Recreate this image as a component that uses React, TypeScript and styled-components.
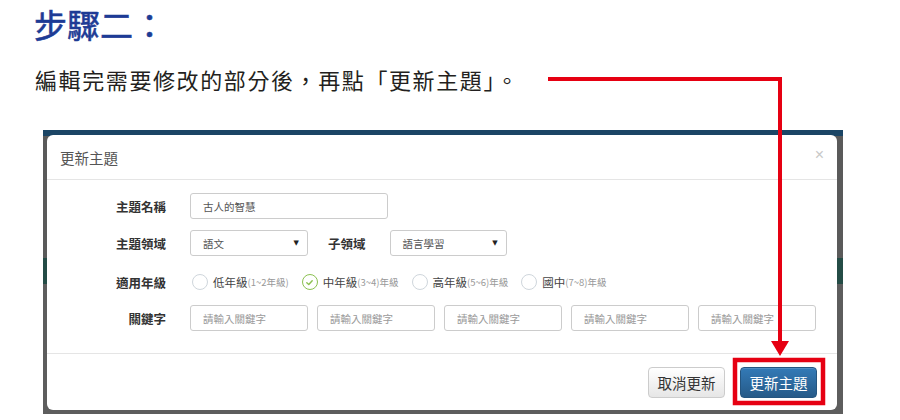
import React from "react";
import styled, { createGlobalStyle } from "styled-components";

/* global */
const GlobalStyle = createGlobalStyle`
  html, body {
    margin: 0;
    padding: 0;
    background: #ffffff;
  }
  body {
    font-family: "Noto Sans CJK TC", "Noto Sans", sans-serif;
  }
`;

/* data */
const grades = [
  { name: "低年級", range: "(1~2年級)", checked: false },
  { name: "中年級", range: "(3~4)年級", checked: true },
  { name: "高年級", range: "(5~6)年級", checked: false },
  { name: "國中", range: "(7~8)年級", checked: false },
];
const keywords = [0, 1, 2, 3, 4];

/* styled */
const Page = styled.div`
  position: relative;
  width: 900px;
  height: 420px;
  overflow: hidden;
`;

const Heading = styled.h1`
  margin: 0;
  padding: 4px 0 0 34px;
  height: 48px;
  font-size: 33px;
  line-height: 40px;
  font-weight: 400;
  color: #1d3b95;
  -webkit-text-stroke: 0.6px #1d3b95;
`;

const Intro = styled.p`
  margin: 0;
  padding: 12px 0 0 35px;
  height: 35px;
  font-size: 22px;
  line-height: 30px;
  letter-spacing: 1.6px;
  color: #231f20;
`;

const Shot = styled.div`
  margin: 31px 0 0 43px;
  width: 800px;
  height: 284px;
  background: linear-gradient(
    to bottom,
    #1b4565 0px,
    #1b4565 6px,
    #5a5a5a 6px,
    #5a5a5a 128px,
    #244c46 128px,
    #244c46 154px,
    #5d5d5d 154px
  );
  padding: 5px 6px 0 4px;
  box-sizing: border-box;
`;

const Modal = styled.div`
  background: #ffffff;
  border-radius: 6px;
  height: 275px;
  display: flex;
  flex-direction: column;
`;

const Header = styled.div`
  height: 44px;
  border-bottom: 1px solid #e5e5e5;
  display: flex;
  align-items: center;
  justify-content: space-between;
  padding: 0 13px 0 13px;
`;

const Title = styled.span`
  font-size: 14.5px;
  color: #555555;
`;

const Close = styled.span`
  font-family: "Liberation Sans", sans-serif;
  font-size: 16px;
  color: #c8c8c8;
  margin-top: -4px;
`;

const Body = styled.div`
  flex: 1;
  padding: 12px 0 0 0;
  display: flex;
  flex-direction: column;
  border-bottom: 1px solid #e5e5e5;
`;

const Row = styled.div<{ $h: number }>`
  display: flex;
  align-items: center;
  height: ${(p) => p.$h}px;
`;

const Label = styled.div`
  width: 119px;
  padding-right: 24px;
  text-align: right;
  font-size: 12.5px;
  font-weight: 700;
  color: #333333;
  flex: none;
`;

const SubLabel = styled.div`
  font-size: 12.5px;
  font-weight: 700;
  color: #333333;
  margin: 0 24px 0 20px;
`;

const Field = styled.div<{ $w: number; $muted?: boolean }>`
  width: ${(p) => p.$w}px;
  height: 26px;
  box-sizing: border-box;
  border: 1px solid #cccccc;
  border-radius: 3px;
  display: flex;
  align-items: center;
  justify-content: space-between;
  padding: 0 8px 0 12px;
  font-size: 10.5px;
  color: ${(p) => (p.$muted ? "#9a9a9a" : "#555555")};
  flex: none;
`;

const Caret = styled.span`
  font-family: "DejaVu Sans", sans-serif;
  font-size: 7px;
  color: #222222;
`;

const Keywords = styled.div`
  display: flex;
  gap: 9px;
`;

const Radios = styled.div`
  display: flex;
  align-items: center;
  margin-left: 2px;
`;

const Radio = styled.div`
  display: flex;
  align-items: center;
  margin-right: 13px;
`;

const Circle = styled.span<{ $on: boolean }>`
  width: 16px;
  height: 16px;
  box-sizing: border-box;
  border-radius: 50%;
  border: 1.5px solid ${(p) => (p.$on ? "#8cc152" : "#cfd6dc")};
  display: flex;
  align-items: center;
  justify-content: center;
  margin-right: 5px;
`;

const GradeName = styled.span`
  font-size: 11.5px;
  color: #444444;
`;

const GradeRange = styled.span`
  font-size: 9.5px;
  color: #999999;
`;

const Footer = styled.div`
  height: 56px;
  display: flex;
  align-items: center;
  justify-content: flex-end;
  gap: 15px;
  padding: 0 20px 0 0;
`;

const Button = styled.button<{ $primary?: boolean }>`
  width: 77px;
  height: 31px;
  border-radius: 4px;
  font-family: "Noto Sans CJK TC", sans-serif;
  font-size: 14.5px;
  padding: 0;
  border: 1px solid ${(p) => (p.$primary ? "#245580" : "#cccccc")};
  color: ${(p) => (p.$primary ? "#ffffff" : "#333333")};
  background: ${(p) =>
    p.$primary
      ? "linear-gradient(to bottom, #337ab7, #265a88)"
      : "linear-gradient(to bottom, #ffffff, #e6e6e6)"};
  box-shadow: inset 0 1px 0 rgba(255, 255, 255, 0.15);
`;

const Overlay = styled.svg`
  position: absolute;
  left: 0;
  top: 0;
  pointer-events: none;
`;

/* DOM */
const App: React.FC = (): JSX.Element => {
  return (
    <Page>
      <GlobalStyle />
      <Heading>步驟二：</Heading>
      <Intro>編輯完需要修改的部分後，再點「更新主題」。</Intro>
      <Shot>
        <Modal>
          <Header>
            <Title>更新主題</Title>
            <Close>×</Close>
          </Header>
          <Body>
            <Row $h={28}>
              <Label>主題名稱</Label>
              <Field $w={198}>古人的智慧</Field>
            </Row>
            <Row $h={46}>
              <Label>主題領域</Label>
              <Field $w={118}>
                語文<Caret>▼</Caret>
              </Field>
              <SubLabel>子領域</SubLabel>
              <Field $w={117}>
                語言學習<Caret>▼</Caret>
              </Field>
            </Row>
            <Row $h={32}>
              <Label>適用年級</Label>
              <Radios>
                {grades.map((g) => (
                  <Radio key={g.name}>
                    <Circle $on={g.checked}>
                      {g.checked && (
                        <svg width="9" height="9" viewBox="0 0 10 10">
                          <path
                            d="M2 5.2 L4.2 7.3 L8 3"
                            fill="none"
                            stroke="#8cc152"
                            strokeWidth="1.6"
                            strokeLinecap="round"
                            strokeLinejoin="round"
                          />
                        </svg>
                      )}
                    </Circle>
                    <GradeName>{g.name}</GradeName>
                    <GradeRange>{g.range}</GradeRange>
                  </Radio>
                ))}
              </Radios>
            </Row>
            <Row $h={40}>
              <Label>關鍵字</Label>
              <Keywords>
                {keywords.map((k) => (
                  <Field key={k} $w={118} $muted>
                    請輸入關鍵字
                  </Field>
                ))}
              </Keywords>
            </Row>
          </Body>
          <Footer>
            <Button>取消更新</Button>
            <Button $primary>更新主題</Button>
          </Footer>
        </Modal>
      </Shot>
      <Overlay width="900" height="420" viewBox="0 0 900 420">
        <polyline
          points="548,79 780,79 780,342"
          fill="none"
          stroke="#e60012"
          strokeWidth="4"
        />
        <polygon points="771,341 789,341 780,356" fill="#e60012" />
        <rect x="735" y="360" width="88" height="43" fill="none" stroke="#e60012" strokeWidth="4.5" />
      </Overlay>
    </Page>
  );
};

export default App;
